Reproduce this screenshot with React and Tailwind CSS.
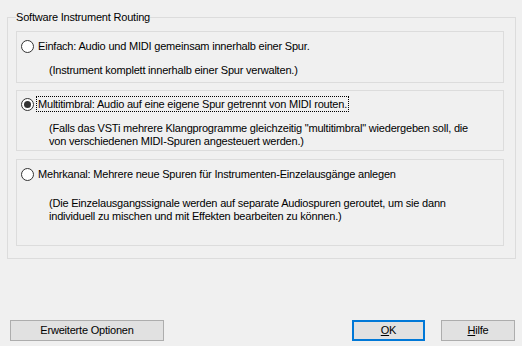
import React, { useState } from 'react';

const Radio = ({ checked }) => (
  <span className="w-[13px] h-[13px] rounded-full border border-[#333333] bg-white flex items-center justify-center shrink-0">
    {checked && <span className="w-[7px] h-[7px] rounded-full bg-[#333333]" />}
  </span>
);

const options = [
  {
    id: 'simple',
    label: 'Einfach: Audio und MIDI gemeinsam innerhalb einer Spur.',
    desc: ['(Instrument komplett innerhalb einer Spur verwalten.)'],
    boxClass: 'h-[52px] pt-[6px] mb-[7px]',
    descClass: 'mt-[10px]',
  },
  {
    id: 'multi',
    label: 'Multitimbral: Audio auf eine eigene Spur getrennt von MIDI routen.',
    desc: [
      '(Falls das VSTi mehrere Klangprogramme gleichzeitig "multitimbral" wiedergeben soll, die',
      'von verschiedenen MIDI-Spuren angesteuert werden.)',
    ],
    boxClass: 'h-[61px] pt-[5px] mb-[8px]',
    descClass: 'mt-[10px]',
  },
  {
    id: 'multiout',
    label: 'Mehrkanal: Mehrere neue Spuren für Instrumenten-Einzelausgänge anlegen',
    desc: [
      '(Die Einzelausgangssignale werden auf separate Audiospuren geroutet, um sie dann',
      'individuell zu mischen und mit Effekten bearbeiten zu können.)',
    ],
    boxClass: 'h-[87px] pt-[6px]',
    descClass: 'mt-[15px]',
  },
];

export default function App() {
  const [mode, setMode] = useState('multi');

  return (
    <div
      className="w-[522px] h-[346px] bg-[#f0f0f0] text-black text-[11px] tracking-[-0.2px] flex flex-col overflow-hidden"
      style={{ fontFamily: '"Liberation Sans", Arial, sans-serif' }}
    >
      <fieldset className="ml-[7px] mt-[11px] w-[509px] h-[248px] border border-[#dcdcdc] pl-[8px] pt-[7px]">
        <legend className="leading-[13px]">Software Instrument Routing</legend>
        {options.map((o) => (
          <div key={o.id} className={`w-[488px] border border-[#dcdcdc] pl-[4px] flex flex-col ${o.boxClass}`}>
            <div className="flex items-center h-[16px] cursor-default" onClick={() => setMode(o.id)}>
              <Radio checked={mode === o.id} />
              <span
                className={`ml-[2px] px-[1px] leading-[14px] border border-dotted ${
                  mode === o.id ? 'border-black' : 'border-transparent'
                }`}
              >
                {o.label}
              </span>
            </div>
            <div className={`pl-[28px] leading-[13px] ${o.descClass}`}>
              {o.desc.map((line) => (
                <div key={line}>{line}</div>
              ))}
            </div>
          </div>
        ))}
      </fieldset>

      <div className="mt-auto mb-[5px] flex items-center pl-[10px] pr-[7px]">
        <button className="w-[154px] h-[21px] bg-[#e1e1e1] border border-[#adadad]">Erweiterte Optionen</button>
        <button className="ml-auto w-[73px] h-[21px] bg-[#e1e1e1] border-2 border-[#0078d7]">
          <span className="underline">O</span>K
        </button>
        <button className="ml-[16px] w-[74px] h-[21px] bg-[#e1e1e1] border border-[#adadad]">
          <span className="underline">H</span>ilfe
        </button>
      </div>
    </div>
  );
}
